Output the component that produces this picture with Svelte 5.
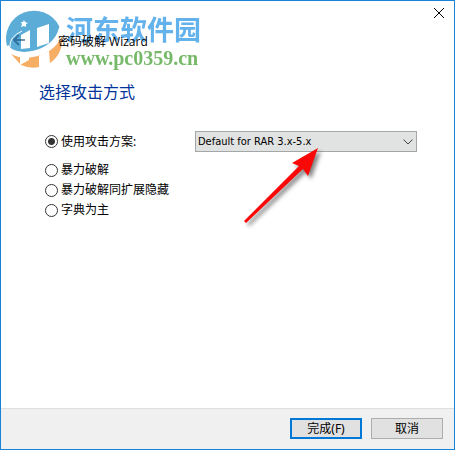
<script lang="ts">
  const plans = ["Default for RAR 3.x-5.x"];
  const attacks = [
    { id: "brute", label: "暴力破解" },
    { id: "hidden", label: "暴力破解同扩展隐藏" },
    { id: "dictionary", label: "字典为主" },
  ];

  let method = $state("plan");
  let plan = $state(plans[0]);
</script>

<main class="window">
  <header class="titlebar">
    <button class="back" type="button" aria-label="返回">
      <svg width="14" height="12" viewBox="0 0 14 12"><path d="M6 1 1 6l5 5M1 6h11" /></svg>
    </button>
    <span class="title">密码破解 Wizard</span>
    <button class="close" type="button" aria-label="关闭">
      <svg width="10" height="10" viewBox="0 0 10 10"><path d="M0 0 10 10M10 0 0 10" /></svg>
    </button>
  </header>

  <div class="watermark">
    <svg width="58" height="58" viewBox="0 0 58 58">
      <path class="blue" d="M2 36A28 28 0 0 1 54 16C57 24 52 34 39 40C25 46 5 47 2 36Z" />
      <path class="orange" d="M6 44C20 52 48 47 57 26A28 28 0 0 1 45 53L44 42L34 46V57Q25 59 16 55Z" />
      <path class="white" d="M16 25 25 20V38L16 39ZM32 18 44 14V33L32 37Z" />
      <path class="swoosh thin" d="M5 37Q4 27 17 21" />
      <path class="swoosh" d="M2 36C7 50 50 46 56 18" />
      <path class="white" d="M15 46H24V50L15 55ZM34 46 44 41V51L34 56Z" />
      <path class="white" d="m19 10 1 2 3 1-2 1v3l-2-1-3 1 1-3-1-2h2Z" />
    </svg>
    <div class="brand">
      <span class="brand-name">河东软件园</span>
      <span class="brand-url">www.pc0359.cn</span>
    </div>
  </div>

  <section class="content">
    <h1>选择攻击方式</h1>
    <div class="plan-row">
      <label class="option">
        <input type="radio" name="method" value="plan" bind:group={method} />
        使用攻击方案:
      </label>
      <div class="plan-field">
        <select aria-label="攻击方案" bind:value={plan}>
          {#each plans as item (item)}
            <option value={item}>{item}</option>
          {/each}
        </select>
        <svg class="chevron" width="10" height="6" viewBox="0 0 10 6"><path d="M.5.5 5 5 9.5.5" /></svg>
        <svg class="pointer" width="90" height="90" viewBox="0 0 90 90">
          <path d="M8 79 6 77 61 22 54 19 80 4 70 32 65 25Z" />
        </svg>
      </div>
    </div>
    <div class="options">
      {#each attacks as attack (attack.id)}
        <label class="option">
          <input type="radio" name="method" value={attack.id} bind:group={method} />
          {attack.label}
        </label>
      {/each}
    </div>
  </section>

  <footer>
    <button class="action primary" type="button">完成(F)</button>
    <button class="action" type="button">取消</button>
  </footer>
</main>

<style>
  :global(body) {
    background: #fff;
  }

  .window {
    position: relative;
    display: flex;
    flex-direction: column;
    box-sizing: border-box;
    min-height: 100vh;
    border: 1px solid #1883d7;
    color: #000;
    font: 12px/16px "Noto Sans", "Noto Sans CJK SC", sans-serif;
  }

  button {
    font: inherit;
    color: inherit;
  }

  .titlebar {
    display: flex;
    align-items: flex-end;
    height: 49px;
    padding: 0 6px 0 8px;
  }

  .back,
  .close {
    display: flex;
    padding: 4px;
    border: 0;
    background: none;
  }

  .back svg,
  .close svg {
    fill: none;
    stroke: #174f7c;
    stroke-width: 2;
  }

  .back {
    position: relative;
    z-index: 1;
    opacity: 0.6;
  }

  .close {
    align-self: flex-start;
    margin: 3px 0 0 auto;
  }

  .close svg {
    stroke: #000;
    stroke-width: 1;
  }

  .title {
    position: relative;
    z-index: 1;
    margin-left: 27px;
    font-family: "Open Sans", "Noto Sans CJK SC", sans-serif;
  }

  .watermark {
    position: absolute;
    top: 9px;
    left: 4px;
    display: flex;
    gap: 3px;
    opacity: 0.8;
    pointer-events: none;
  }

  .blue {
    fill: #3498cf;
  }

  .orange {
    fill: #f49b3f;
  }

  .white {
    fill: #fff;
  }

  .swoosh {
    fill: none;
    stroke: #fff;
    stroke-width: 4;
  }

  .thin {
    stroke-width: 1;
  }

  .brand {
    display: flex;
    flex-direction: column;
  }

  .brand-name {
    color: #3d9fe8;
    font: bold 27px/38px "Noto Sans CJK SC", sans-serif;
  }

  .brand-url {
    color: #55a844;
    font: bold 20px/20px "Liberation Serif", serif;
  }

  .content {
    flex: 1;
    padding: 27px 37px 0 38px;
  }

  h1 {
    margin: 0;
    color: #003399;
    font: 16px/28px "Noto Sans CJK SC", sans-serif;
  }

  .plan-row {
    display: flex;
    align-items: center;
    gap: 16px;
    margin-top: 26px;
  }

  .plan-row .option {
    width: 134px;
  }

  .option {
    display: flex;
    align-items: center;
    gap: 3px;
    padding-left: 6px;
  }

  .options {
    display: flex;
    flex-direction: column;
    gap: 4px;
    margin-top: 10px;
  }

  input {
    appearance: none;
    box-sizing: border-box;
    width: 13px;
    height: 13px;
    margin: 0;
    border: 1px solid #333;
    border-radius: 50%;
    background: #fff;
  }

  input:checked {
    background: radial-gradient(circle, #333 3px, #fff 4px);
  }

  .plan-field {
    position: relative;
    flex: 1;
  }

  select {
    appearance: none;
    display: block;
    box-sizing: border-box;
    width: 100%;
    height: 21px;
    padding: 0 24px 0 2px;
    border: 1px solid #a3a7a7;
    border-radius: 0;
    background: #e1e3e2;
    color: #000;
    font: 11px/18px "DejaVu Sans Condensed", sans-serif;
  }

  .chevron {
    position: absolute;
    top: 8px;
    right: 4px;
    fill: none;
    stroke: #444;
    pointer-events: none;
  }

  .pointer {
    position: absolute;
    top: 13px;
    left: 43px;
    fill: #f90808;
    filter: drop-shadow(3px 3px 2px rgba(0, 0, 0, 0.5));
    pointer-events: none;
  }

  footer {
    display: flex;
    justify-content: flex-end;
    gap: 9px;
    padding: 9px 11px 10px;
    border-top: 1px solid #dfdfdf;
    background: #f0f0f0;
  }

  .action {
    box-sizing: border-box;
    width: 72px;
    height: 21px;
    padding: 0;
    border: 1px solid #adadad;
    background: #e1e1e1;
  }

  .primary {
    border: 2px solid #0078d7;
  }
</style>
